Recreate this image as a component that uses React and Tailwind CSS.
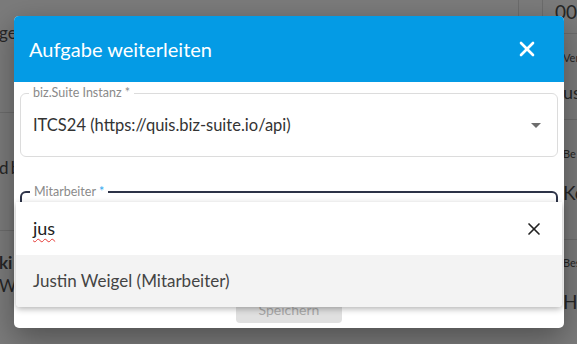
import React from 'react';
import { X } from 'lucide-react';

const font = { fontFamily: 'Lato, "Noto Sans", sans-serif' };

const Field = ({ label, focused, children }) => (
  <div
    className={
      'relative rounded-md ' +
      (focused ? 'border-2 border-[#2d3348]' : 'border border-[#dcdcdc]')
    }
  >
    <div className="absolute -top-[9px] left-[8px] bg-white px-[4px] text-[12.5px] leading-[16px] text-[#8a8a8a]">
      {label}
    </div>
    {children}
  </div>
);

export default function App() {
  return (
    <div
      className="relative w-[577px] h-[344px] overflow-hidden bg-[#7b7b7b] text-[#262626]"
      style={font}
    >
      {/* dimmed app behind the dialog */}
      <div className="flex h-full justify-between">
        <div className="flex w-[40px] flex-col text-[17px]">
          <div className="h-[113px] border-b border-[#6c6c6c] pt-[20px] -ml-[1px]">ge</div>
          <div className="h-[118px] border-b border-[#6c6c6c] pt-[42px] -ml-[1px] tracking-[-1px]">d b</div>
          <div className="pt-[20px] leading-[23px] -ml-[1px]">
            <div className="font-bold">ki</div>
            <div>Wi</div>
          </div>
        </div>
        <div className="flex w-[59px] flex-col">
          <div className="flex h-[34px] border-b border-[#6c6c6c]">
            <div className="w-[28px] border-l border-r border-[#6c6c6c]" />
            <div className="pl-[12px] pt-[1px] text-[19px] leading-[22px]">00</div>
          </div>
          <div className="h-[86px] border-b border-[#6c6c6c] pl-[45px] pt-[16px] text-[11px]">
            <div>Ver</div>
            <div className="pt-[12px] text-[18px]">us</div>
          </div>
          <div className="h-[120px] border-b border-[#6c6c6c] pl-[45px] pt-[26px]">
            <div className="text-[11px]">Be</div>
            <div className="pt-[16px] text-[19px]">Ko</div>
          </div>
          <div className="pl-[45px] pt-[15px]">
            <div className="text-[11px]">Bes</div>
            <div className="pt-[16px] text-[19px]">Ho</div>
          </div>
        </div>
      </div>

      {/* dialog */}
      <div className="absolute left-[14px] top-[16px] flex h-[312px] w-[550px] flex-col overflow-hidden rounded-[5px] bg-white shadow-[0_10px_30px_rgba(0,0,0,0.35)]">
        <div className="flex h-[66px] items-center justify-between bg-[#049be5] pl-[15px] pr-[25px]">
          <span className="text-[20px] text-white">Aufgabe weiterleiten</span>
          <X size={24} strokeWidth={2.6} className="text-white" />
        </div>
        <div className="flex flex-1 flex-col px-[6px] pt-[11px]">
          <Field label="biz.Suite Instanz *">
            <div className="flex h-[62px] items-center justify-between pl-[12px] pr-[16px] text-[16.5px] text-[#333]">
              <span>ITCS24 (https://quis.biz-suite.io/api)</span>
              <span className="h-0 w-0 border-x-[5px] border-t-[5px] border-x-transparent border-t-[#6d6d6d]" />
            </div>
          </Field>
          <div className="mt-[34px]">
            <Field label={<span>Mitarbeiter <span className="text-[#2aa7ef]">*</span></span>} focused>
              <div className="h-[40px]" />
            </Field>
          </div>
          <div className="mt-[60px] flex justify-center">
            <div className="flex h-[28px] w-[106px] items-center justify-center rounded-[4px] bg-[#e0e0e0] text-[14px] text-[#a8a8a8]">
              Speichern
            </div>
          </div>
        </div>
      </div>

      {/* autocomplete popup */}
      <div className="absolute left-[16px] top-[202px] w-[546px] overflow-hidden rounded-b-[4px] bg-white shadow-[0_2px_6px_rgba(0,0,0,0.3)]">
        <div className="flex h-[53px] items-center justify-between pl-[17px] pr-[18px] shadow-[0_2px_4px_rgba(0,0,0,0.2)]">
          <span className="text-[18px] text-[#222] underline decoration-wavy decoration-[#e53935] decoration-1 underline-offset-[3px]">
            jus
          </span>
          <X size={20} strokeWidth={2} className="text-[#222]" />
        </div>
        <div className="flex h-[52px] items-center bg-[#f3f3f3] pl-[17px] text-[17px] text-[#444]">
          Justin Weigel (Mitarbeiter)
        </div>
      </div>
    </div>
  );
}
